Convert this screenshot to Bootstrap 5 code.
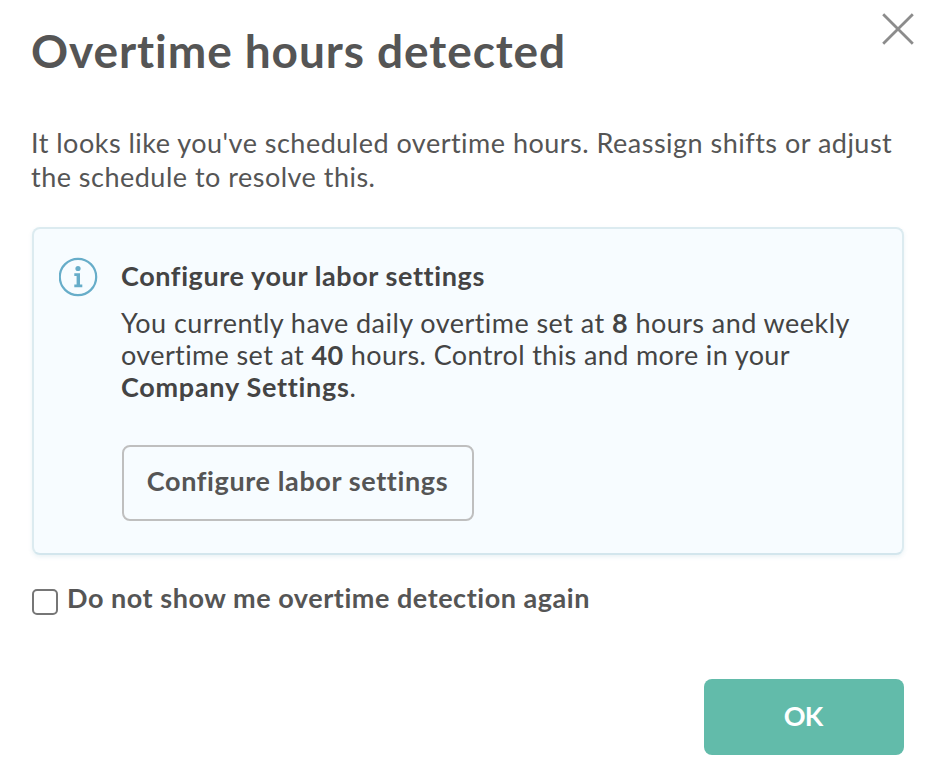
<!DOCTYPE html>
<html lang="en">
<head>
<meta charset="utf-8">
<meta name="viewport" content="width=device-width, initial-scale=1">
<title>Overtime hours detected</title>
<link href="https://cdn.jsdelivr.net/npm/bootstrap@5.3.0/dist/css/bootstrap.min.css" rel="stylesheet">
<style>
  body { font-family: Lato, "Liberation Sans", sans-serif; font-size: 27px; color: #555; background: #fff; font-variant-ligatures: none; }
  .dialog { height: 767px; padding: 0 32px 12px; }
  .dialog-title { font-size: 46px; line-height: 56px; font-weight: 700; letter-spacing: .92px; padding-top: 23px; margin-left: -1px; }
  .close-btn { margin: 13px -10px 0 0; line-height: 0; color: #8c8c8c; }
  .intro { line-height: 34px; margin-top: 47px; letter-spacing: .49px; margin-left: -1px; }
  .notice { height: 328px; margin-top: 33px; padding: 28px 24px 0 25px; gap: 22px; color: #444; background: #f7fcff; border: 2px solid #dcebf0; border-bottom-color: #d3e6ed; border-radius: 8px; box-shadow: 0 2px 4px rgba(80, 150, 175, .12); }
  .notice-title { font-size: 27px; line-height: 38px; font-weight: 700; letter-spacing: .6px; }
  .notice-text { line-height: 32px; margin-top: 12px; }
  .line-a { letter-spacing: .45px; }
  .line-b { letter-spacing: .38px; }
  .line-c { letter-spacing: .72px; }
  .btn-configure { width: 352px; height: 76px; margin: 42px 0 0 1px; font-size: 27px; font-weight: 700; letter-spacing: .62px; color: #555; border: 2px solid #bfbfbf; border-radius: 8px; padding: 0 1px 3px 0; }
  .again { margin-top: 27px; gap: 9px; line-height: 32px; font-weight: 700; letter-spacing: .54px; }
  .again .form-check-input { width: 26px; height: 26px; margin: 7px 0 0; border: 2px solid #767676; border-radius: 5px; flex: none; }
  .btn-ok { width: 200px; height: 76px; font-size: 27px; font-weight: 700; letter-spacing: -.8px; color: #fff; background: #62bbaa; border: 0; border-radius: 8px; padding: 0 2px 2px 0; }
</style>
</head>
<body>
<main class="dialog d-flex flex-column" role="dialog" aria-labelledby="title">
  <header class="d-flex justify-content-between align-items-start">
    <h1 class="dialog-title mb-0 text-nowrap" id="title">Overtime hours detected</h1>
    <button class="close-btn btn p-0 border-0" type="button" aria-label="Close">
      <svg width="32" height="32" viewBox="0 0 32 32" fill="none" stroke="currentColor" stroke-width="2.8"><path d="M1.2 1.2 30.8 30.8M30.8 1.2 1.2 30.8"/></svg>
    </button>
  </header>
  <p class="intro mb-0 text-nowrap">It looks like you've scheduled overtime hours. Reassign shifts or adjust<br>the schedule to resolve this.</p>
  <section class="notice d-flex align-items-start">
    <svg class="flex-shrink-0" width="40" height="40" viewBox="0 0 40 40" fill="none"><circle cx="19" cy="20" r="18.2" stroke="#67adc9" stroke-width="2.2"/><circle cx="19" cy="11.500" r="2.600" fill="#67adc9"/><path d="M15.300 16.300h5.700v11.200h2.300v2.800h-8v-2.800h2.300v-8.400h-2.300z" fill="#67adc9"/></svg>
    <div>
      <h2 class="notice-title mb-0">Configure your labor settings</h2>
      <p class="notice-text mb-0 text-nowrap"><span class="line-a">You currently have daily overtime set at <strong>8</strong> hours and weekly</span><br><span class="line-b">overtime set at <strong>40</strong> hours. Control this and more in your</span><br><span class="line-c"><strong>Company Settings</strong>.</span></p>
      <button class="btn btn-configure" type="button">Configure labor settings</button>
    </div>
  </section>
  <label class="again d-flex align-items-start"><input class="form-check-input" type="checkbox"><span>Do not show me overtime detection again</span></label>
  <footer class="d-flex justify-content-end mt-auto"><button class="btn btn-ok" type="button">OK</button></footer>
</main>
</body>
</html>
